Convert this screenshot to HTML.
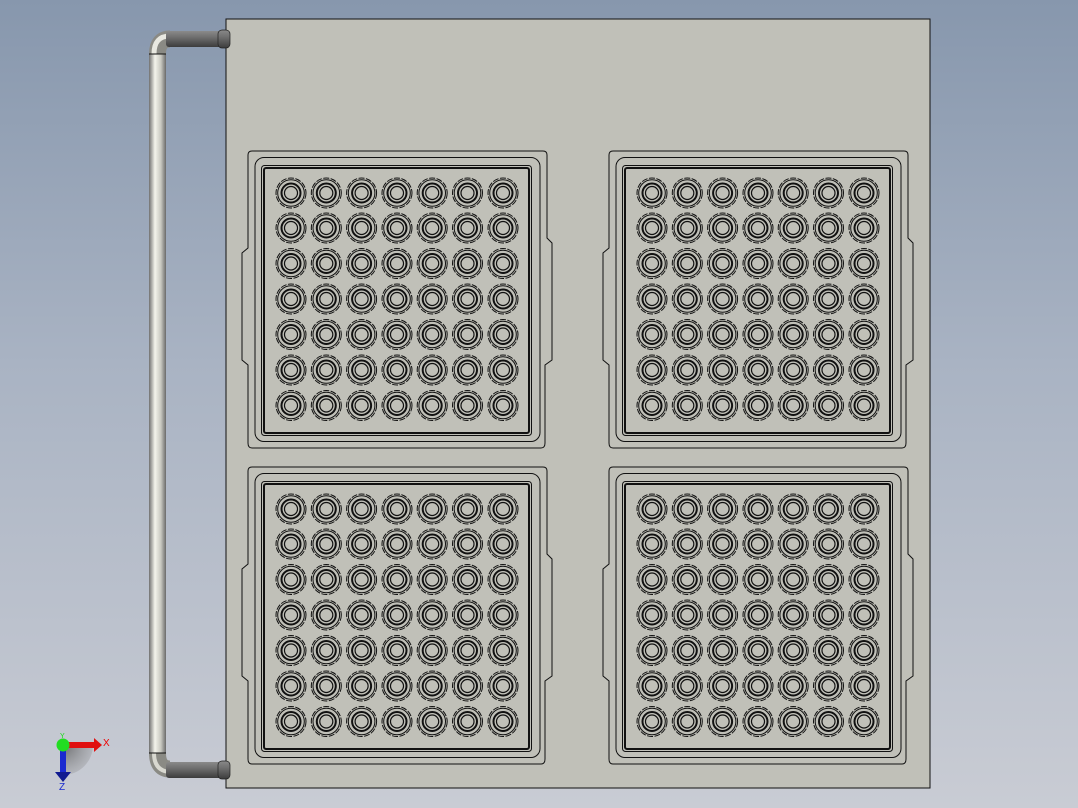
<!DOCTYPE html>
<html><head><style>
html,body{margin:0;padding:0;width:1078px;height:808px;overflow:hidden;}
body{background:linear-gradient(#8797ad 0%,#a9b3c3 45%,#c9ccd4 100%);}
svg{position:absolute;left:0;top:0}
</style></head><body>
<svg width="1078" height="808" viewBox="0 0 1078 808">
<defs>
<linearGradient id="pipeV" x1="0" x2="1">
<stop offset="0" stop-color="#707070"/><stop offset="0.35" stop-color="#f4f4ec"/><stop offset="0.7" stop-color="#c8c8c0"/><stop offset="1" stop-color="#6a6a6a"/>
</linearGradient>
<linearGradient id="pipeH" x1="0" y1="0" x2="0" y2="1">
<stop offset="0" stop-color="#8a8a8a"/><stop offset="0.4" stop-color="#6e6e6e"/><stop offset="1" stop-color="#3c3c3c"/>
</linearGradient>
<radialGradient id="sh" cx="0" cy="0" r="1">
<stop offset="0" stop-color="#555" stop-opacity="0.8"/><stop offset="1" stop-color="#888" stop-opacity="0.3"/>
</radialGradient>
<g id="hole" fill="none" stroke="#111">
<circle r="15" stroke-width="1" stroke-dasharray="6 1.5"/>
<circle r="13.3" stroke-width="1"/>
<circle r="9.5" stroke-width="2"/>
<circle r="6.5" stroke-width="1.2"/>
</g>
<g id="row">
<use href="#hole" x="0"/><use href="#hole" x="35.3"/><use href="#hole" x="70.6"/><use href="#hole" x="106"/><use href="#hole" x="141.2"/><use href="#hole" x="176.5"/><use href="#hole" x="212"/>
</g>
<g id="panel">
<path d="M252 151 H543 Q547 151 547 155 V238 L552 243 V360 L545 365 V443 Q545 448 541 448 H252 Q248 448 248 443 V365 L242 360 V253 L248 248 V155 Q248 151 252 151 Z" fill="none" stroke="#111" stroke-width="1"/>
<rect x="255" y="157.5" width="285" height="284" rx="9" fill="none" stroke="#111" stroke-width="1"/>
<rect x="261.5" y="165.5" width="270" height="270" rx="3" fill="none" stroke="#111" stroke-width="1"/>
<rect x="264" y="168" width="265" height="265" rx="2" fill="none" stroke="#111" stroke-width="2"/>
<use href="#row" x="291" y="193"/><use href="#row" x="291" y="228"/><use href="#row" x="291" y="263.5"/><use href="#row" x="291" y="299"/><use href="#row" x="291" y="334.5"/><use href="#row" x="291" y="370"/><use href="#row" x="291" y="405.5"/>
</g>
</defs>
<rect x="226" y="19" width="704" height="769" fill="#c0c0b8" stroke="#111" stroke-width="1"/>
<use href="#panel"/>
<use href="#panel" x="361"/>
<use href="#panel" y="316"/>
<use href="#panel" x="361" y="316"/>
<!-- pipe -->
<rect x="149" y="53" width="17" height="701" fill="url(#pipeV)"/>
<path d="M157.5 54 Q157.5 39 170 39" fill="none" stroke="#8a8a84" stroke-width="17"/>
<path d="M154 54 Q154 36 170 36" fill="none" stroke="#e8e8e0" stroke-width="5"/>
<line x1="149" y1="54" x2="166" y2="54" stroke="#111" stroke-width="1"/>
<rect x="166" y="31" width="56" height="16" rx="3" fill="url(#pipeH)"/>
<rect x="218" y="30" width="12" height="18" rx="4" fill="url(#pipeH)" stroke="#222" stroke-width="0.7"/>
<path d="M157.5 753 Q157.5 769 170 769" fill="none" stroke="#8a8a84" stroke-width="17"/>
<path d="M154 753 Q154 771 170 772" fill="none" stroke="#d8d8d0" stroke-width="4"/>
<line x1="149" y1="753" x2="166" y2="753" stroke="#111" stroke-width="1"/>
<rect x="166" y="762" width="56" height="16" rx="3" fill="url(#pipeH)"/>
<rect x="218" y="761" width="12" height="18" rx="4" fill="url(#pipeH)" stroke="#222" stroke-width="0.7"/>
<!-- axis triad -->
<path d="M63 745 L93 745 A30 30 0 0 1 63 775 Z" fill="url(#sh)"/>
<rect x="63" y="742" width="32" height="6" fill="#e01010"/>
<polygon points="94,738 102,745 94,752" fill="#e01010"/>
<rect x="60" y="745" width="6" height="28" fill="#1a2ad0"/>
<polygon points="55,772 71,772 63,782" fill="#101a90"/>
<circle cx="63" cy="745" r="6.5" fill="#22dd22"/>
<text x="103" y="746" font-family="Liberation Sans, sans-serif" font-size="10" fill="#e00">X</text>
<text x="59" y="790" font-family="Liberation Sans, sans-serif" font-size="10" fill="#1a2ad0">Z</text>
<text x="60" y="738" font-family="Liberation Sans, sans-serif" font-size="7" fill="#1d1">Y</text>
</svg>
</body></html>
